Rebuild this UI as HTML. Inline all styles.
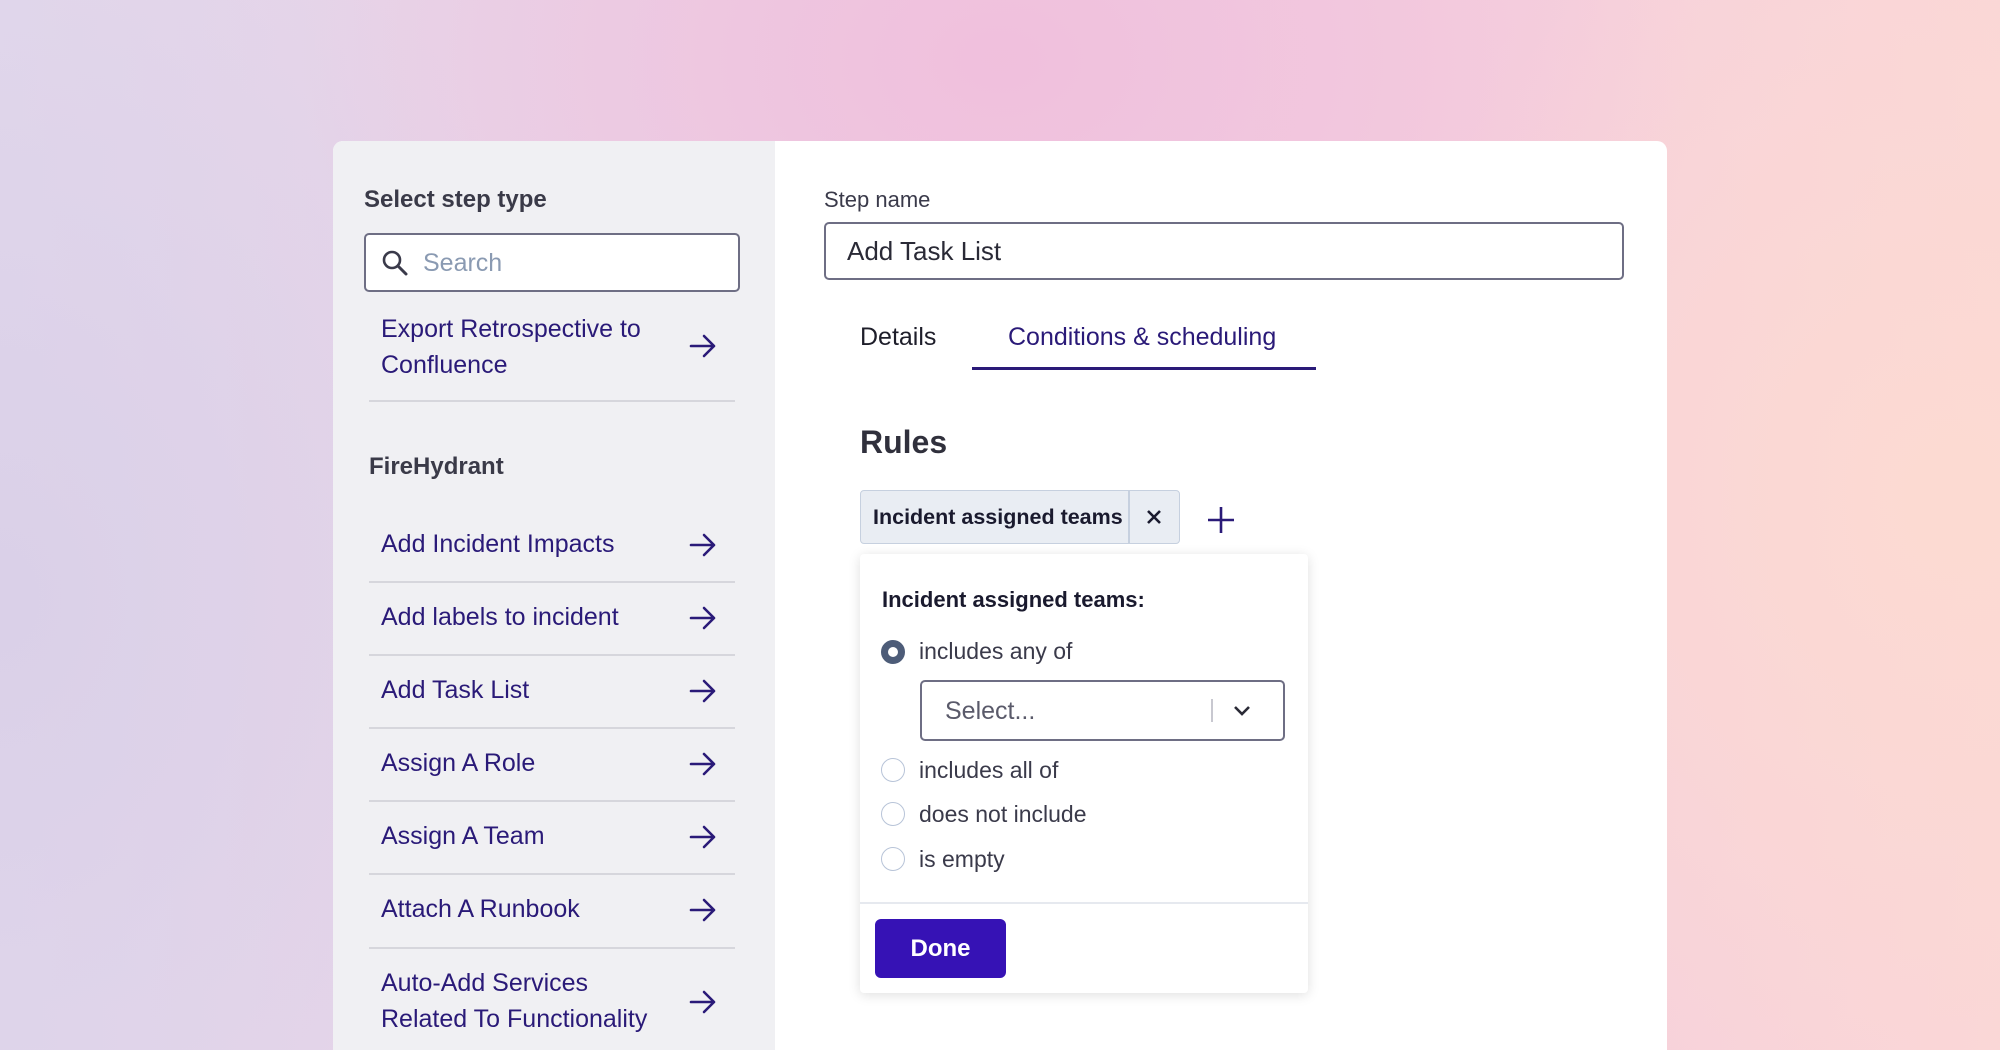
<!DOCTYPE html>
<html style="width:2000px;height:1050px;overflow:hidden"><head><meta charset="utf-8"><style>
*{margin:0;padding:0;box-sizing:border-box}
body{width:2000px;height:1050px;overflow:hidden;font-family:"Liberation Sans",sans-serif;position:relative;
background:
radial-gradient(ellipse 700px 500px at 1000px 60px,rgba(240,190,220,0.9),rgba(240,190,220,0) 100%),
radial-gradient(ellipse 600px 700px at 1950px 500px,rgba(252,218,210,1),rgba(252,218,210,0) 100%),
radial-gradient(ellipse 600px 800px at 0px 600px,rgba(218,208,232,1),rgba(218,208,232,0) 100%),
linear-gradient(90deg,#e2d8ec 0%,#ecd0e4 40%,#f4cede 70%,#fad6d8 100%);}
.a{position:absolute;white-space:nowrap}
.card{position:absolute;left:333px;top:141px;width:1334px;height:909px;background:#fff;border-radius:10px 10px 0 0;overflow:hidden}
.left{position:absolute;left:0;top:0;width:442px;height:100%;background:#f0f0f3}
.item{color:#2a1a78;font-size:25px}
.div{position:absolute;left:369px;width:366px;height:2px;background:#d6d6dc}
.arr{position:absolute;left:689px;width:28px;height:24px}
.radio{position:absolute;left:881px;width:24px;height:24px;border-radius:50%;border:1.5px solid #b8c4d8;background:#fff}
.opt{color:#3a3a4a;font-size:23px}
</style></head><body>
<div class="card"><div class="left"></div></div>

<div class="a" style="left:364px;top:186px;font-size:24px;font-weight:bold;color:#3a3a48">Select step type</div>
<div class="a" style="left:364px;top:233px;width:376px;height:59px;border:2px solid #6e6e84;border-radius:5px;background:#fff"></div>
<svg class="a" style="left:380px;top:248px" width="30" height="30" viewBox="0 0 30 30"><circle cx="12" cy="12" r="8" fill="none" stroke="#3a3a4a" stroke-width="2.6"/><path d="M18 18 L26 26" stroke="#3a3a4a" stroke-width="3" stroke-linecap="round"/></svg>
<div class="a" style="left:423px;top:249px;font-size:25px;color:#8a9ab2">Search</div>

<div class="a item" style="left:381px;top:311px;line-height:36px">Export Retrospective to<br>Confluence</div>
<div class="div" style="top:400px"></div>
<div class="a" style="left:369px;top:453px;font-size:24px;font-weight:bold;color:#3a3a48">FireHydrant</div>

<div class="a item" style="left:381px;top:530px">Add Incident Impacts</div>
<div class="div" style="top:581px"></div>
<div class="a item" style="left:381px;top:603px">Add labels to incident</div>
<div class="div" style="top:654px"></div>
<div class="a item" style="left:381px;top:676px">Add Task List</div>
<div class="div" style="top:727px"></div>
<div class="a item" style="left:381px;top:749px">Assign A Role</div>
<div class="div" style="top:800px"></div>
<div class="a item" style="left:381px;top:822px">Assign A Team</div>
<div class="div" style="top:873px"></div>
<div class="a item" style="left:381px;top:895px">Attach A Runbook</div>
<div class="div" style="top:947px"></div>
<div class="a item" style="left:381px;top:965px;line-height:36px">Auto-Add Services<br>Related To Functionality</div>

<svg width="0" height="0" style="position:absolute"><defs><symbol id="ar" viewBox="0 0 28 24"><path d="M2 12 H25 M15 2 L25 12 L15 22" fill="none" stroke="#2a1a78" stroke-width="2.6" stroke-linecap="round" stroke-linejoin="round"/></symbol></defs></svg>
<svg class="arr" style="top:334px"><use href="#ar"/></svg>
<svg class="arr" style="top:533px"><use href="#ar"/></svg>
<svg class="arr" style="top:606px"><use href="#ar"/></svg>
<svg class="arr" style="top:679px"><use href="#ar"/></svg>
<svg class="arr" style="top:752px"><use href="#ar"/></svg>
<svg class="arr" style="top:825px"><use href="#ar"/></svg>
<svg class="arr" style="top:898px"><use href="#ar"/></svg>
<svg class="arr" style="top:990px"><use href="#ar"/></svg>

<div class="a" style="left:824px;top:187px;font-size:22px;color:#3a3a4a">Step name</div>
<div class="a" style="left:824px;top:222px;width:800px;height:58px;border:2px solid #6e6e84;border-radius:5px;background:#fff"></div>
<div class="a" style="left:847px;top:236px;font-size:26px;color:#2a2a36">Add Task List</div>

<div class="a" style="left:860px;top:323px;font-size:25px;color:#1e1e2a">Details</div>
<div class="a" style="left:1008px;top:323px;font-size:25px;color:#2a1a78">Conditions &amp; scheduling</div>
<div class="a" style="left:972px;top:367px;width:344px;height:3px;background:#2a1a78"></div>

<div class="a" style="left:860px;top:424px;font-size:32px;font-weight:bold;color:#30303c">Rules</div>

<div class="a" style="left:860px;top:490px;width:320px;height:54px;background:#e9edf3;border:1.5px solid #c6d0df;border-radius:4px"></div>
<div class="a" style="left:1128px;top:491px;width:1.5px;height:52px;background:#c6d0df"></div>
<div class="a" style="left:873px;top:505px;font-size:21.5px;font-weight:bold;color:#1a1a2e">Incident assigned teams</div>
<svg class="a" style="left:1146px;top:509px" width="16" height="16"><path d="M2 2 L14 14 M14 2 L2 14" stroke="#1a1a2e" stroke-width="2.6"/></svg>
<svg class="a" style="left:1206px;top:505px" width="30" height="30"><path d="M15 2 V28 M2 15 H28" stroke="#2a1a78" stroke-width="2.6"/></svg>

<div class="a" style="left:860px;top:554px;width:448px;height:439px;background:#fff;border-radius:4px;box-shadow:0 2px 12px rgba(0,0,0,0.13)"></div>
<div class="a" style="left:882px;top:587px;font-size:22px;font-weight:bold;color:#1a1a2e">Incident assigned teams:</div>
<div class="radio" style="top:640px;border:7px solid #4d5c78"></div>
<div class="a opt" style="left:919px;top:638px">includes any of</div>
<div class="a" style="left:920px;top:680px;width:365px;height:61px;border:2px solid #6e6e84;border-radius:5px;background:#fff"></div>
<div class="a" style="left:945px;top:697px;font-size:25px;color:#5a5a6a">Select...</div>
<div class="a" style="left:1211px;top:699px;width:1.5px;height:23px;background:#c8c8d0"></div>
<svg class="a" style="left:1232px;top:704px" width="20" height="14"><path d="M3 3 L10 10 L17 3" fill="none" stroke="#2a2a36" stroke-width="2.6"/></svg>
<div class="radio" style="top:758px"></div>
<div class="a opt" style="left:919px;top:757px">includes all of</div>
<div class="radio" style="top:802px"></div>
<div class="a opt" style="left:919px;top:801px">does not include</div>
<div class="radio" style="top:847px"></div>
<div class="a opt" style="left:919px;top:846px">is empty</div>
<div class="a" style="left:860px;top:902px;width:448px;height:1.5px;background:#e6e9ef"></div>
<div class="a" style="left:875px;top:919px;width:131px;height:59px;background:#3612b5;border-radius:6px;color:#fff;font-size:24px;font-weight:bold;text-align:center;line-height:59px">Done</div>
</body></html>
